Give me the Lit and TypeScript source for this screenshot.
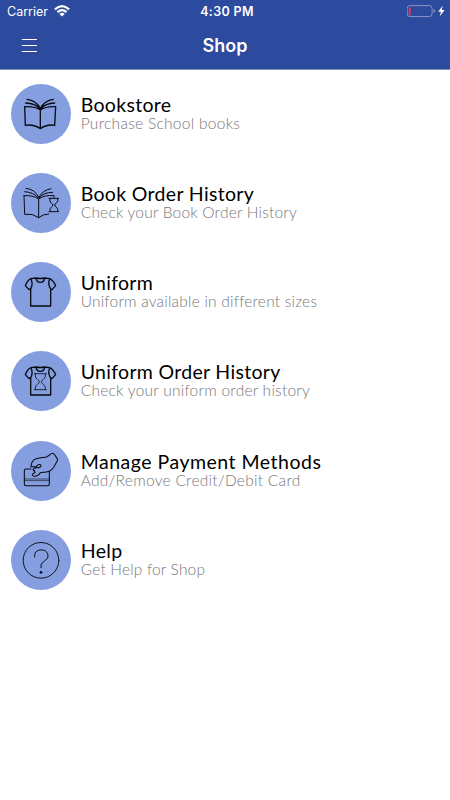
import { LitElement, html, css, svg } from "lit";
import { customElement, property } from "lit/decorators.js";
import { styleMap } from "lit/directives/style-map.js";

const tee = svg`<path stroke-width="4" d="M78 68 L93 66 Q106 69 119 66 L134 68 Q144 72 152 89 L141 101 L137 98 V150 H77 V98 L72 101 L61 89 Q68 72 78 68 Z M93 67 Q95 79 106 79 Q117 79 119 67 M78 69 Q85 83 77 99 M134 69 Q127 83 137 99"/>`;

const icons: Record<string, unknown> = {
  book: svg`<path stroke-width="4" d="M59 86 Q88 84 106 96 Q125 84 152 86 L149 142 Q126 138 106 152 Q86 138 61 142 Z M106 96 V152 M62 75 Q91 75 106 94 Q121 75 149 75 M66 64 Q94 67 106 92 Q118 67 145 64"/>`,
  bookHistory: svg`<path stroke-width="3" d="M57 86 Q83 84 101 96 Q119 83 147 86 V91 M57 86 L59 142 Q83 138 101 152 Q114 141 131 141 M101 96 V152 M59 74 Q87 76 101 94 Q117 75 143 76 M63 64 Q91 67 101 92 Q113 69 138 65 M132 94 H161 M132 134 H161 M135 95 V101 C135 109 144 109 144 114 C144 119 135 121 135 128 V133 M158 95 V101 C158 109 149 109 149 114 C149 119 158 121 158 128 V133"/>`,
  shirt: tee,
  shirtHistory: svg`${tee}<path stroke-width="2.4" d="M88 86 H124 M88 134 H124 M91 87 V93 C91 103 103 104 103 110 C103 117 91 119 91 127 V133 M121 87 V93 C121 103 109 104 109 110 C109 117 121 119 121 127 V133"/>`,
  payment: svg`<path stroke-width="3.2" d="M78 102 H63 Q58 102 58 107 V147 Q58 152 63 152 H128 Q133 152 133 147 V110 M78 95 C79 82 84 75 91 72 C103 68 118 67 125 66 L139 56 Q144 53 147 57 L157 71 Q159 75 156 79 L152 86 C146 101 137 110 124 111 C115 112 110 112 106 113 C101 121 94 125 85 123 C79 121 82 115 89 114 C91 109 88 106 84 104 M77 95 H94 C98 87 108 87 108 92 C108 97 101 98 94 98 Q86 98 84 104"/><path stroke-width="1.8" d="M59 132 H132 M59 137 H132"/>`,
  help: svg`<circle stroke-width="2.8" cx="108" cy="109" r="53.5"/><path stroke-width="3" d="M89 99 V94 C89 72 129 72 129 95 C129 111 108 111 108 126 V131"/><circle class="dot" cx="108" cy="145" r="4"/>`,
};

interface Entry {
  icon: string;
  title: string;
  detail: string;
  titleSpacing: number;
  detailSpacing: number;
}

const entries: Entry[] = [
  { icon: "book", title: "Bookstore", detail: "Purchase School books", titleSpacing: 0.32, detailSpacing: 0.29 },
  { icon: "bookHistory", title: "Book Order History", detail: "Check your Book Order History", titleSpacing: 0.33, detailSpacing: 0.21 },
  { icon: "shirt", title: "Uniform", detail: "Uniform available in different sizes", titleSpacing: 0.29, detailSpacing: 0.21 },
  { icon: "shirtHistory", title: "Uniform Order History", detail: "Check your uniform order history", titleSpacing: 0.31, detailSpacing: 0.25 },
  { icon: "payment", title: "Manage Payment Methods", detail: "Add/Remove Credit/Debit Card", titleSpacing: 0.5, detailSpacing: 0.28 },
  { icon: "help", title: "Help", detail: "Get Help for Shop", titleSpacing: 0.4, detailSpacing: 0.18 },
];

@customElement("shop-row")
class ShopRow extends LitElement {
  @property({ attribute: false }) entry!: Entry;

  static styles = css`
    :host { display: flex; height: 89.125px; padding-left: 11px; gap: 9.7px; box-sizing: border-box; }
    .badge { width: 60px; height: 60px; border-radius: 50%; background: #859ee0; flex: none; }
    .icon { display: block; width: 60px; height: 60px; fill: none; stroke: #080b12; stroke-linejoin: round; stroke-linecap: round; }
    .dot { fill: #080b12; stroke: none; }
    .copy { padding-top: 11px; white-space: nowrap; }
    .title { font-size: 19.5px; line-height: 20px; color: #000; }
    .detail { font-size: 15.5px; line-height: 17px; font-weight: 300; color: #77777b; }
  `;

  render() {
    const e = this.entry;
    return html`
      <div class="badge"><svg class="icon" viewBox="18 18 180 180">${icons[e.icon]}</svg></div>
      <div class="copy">
        <div class="title" style=${styleMap({ letterSpacing: `${e.titleSpacing}px` })}>${e.title}</div>
        <div class="detail" style=${styleMap({ letterSpacing: `${e.detailSpacing}px` })}>${e.detail}</div>
      </div>
    `;
  }
}

@customElement("app-root")
class AppRoot extends LitElement {
  static styles = css`
    :host { display: block; width: 450px; height: 800px; overflow: hidden; background: #fff; font-family: Lato, "Open Sans", sans-serif; }
    .header { height: 70px; box-sizing: border-box; background: #2c4a9e; border-bottom: 1px solid #7e8fc2; color: #fff; font-family: Inter, Roboto, sans-serif; }
    .status { height: 22px; display: grid; grid-template-columns: 1fr auto 1fr; align-items: center; padding: 0 5px 0 7px; font-size: 12.5px; }
    .carrier { display: flex; align-items: center; gap: 6px; letter-spacing: 0; }
    .wifi { width: 16px; height: 12px; }
    .clock { font-weight: 600; letter-spacing: 0.35px; margin-left: 2px; }
    .power { display: flex; justify-content: flex-end; align-items: center; }
    .battery { width: 38px; height: 14px; }
    .nav { height: 47px; display: grid; grid-template-columns: 1fr auto 1fr; align-items: center; }
    .menu { width: 16px; height: 16px; margin: -1px 0 0 21px; }
    .heading { font-size: 18px; font-weight: 600; letter-spacing: 0; }
    .list { padding-top: 14px; }
  `;

  render() {
    return html`
      <div class="header">
        <div class="status">
          <div class="carrier">
            <span>Carrier</span>
            <svg class="wifi" viewBox="0 0 16 12" fill="none" stroke="#fff" stroke-width="2.1">
              <path d="M0.9 4.4 Q8 -2 15.1 4.4 M3.4 7.1 Q8 3 12.6 7.1" />
              <path d="M5.3 8.9 Q8 6.6 10.7 8.9 L8 11.6 Z" fill="#fff" stroke="none" />
            </svg>
          </div>
          <div class="clock">4:30 PM</div>
          <div class="power">
            <svg class="battery" viewBox="0 0 38 14">
              <rect x="0.1" y="1.6" width="25" height="11" rx="2.8" fill="none" stroke="#8695c8" />
              <rect x="1.7" y="3.2" width="2" height="8" rx="0.8" fill="#f43148" />
              <path d="M26.6 5 Q28.3 5.5 28.3 7 Q28.3 8.6 26.6 9 Z" fill="#8695c8" />
              <path d="M35.8 1.5 L31.2 7.8 H34 L32.6 12.5 L37.6 6.1 H34.7 Z" fill="#fff" />
            </svg>
          </div>
        </div>
        <div class="nav">
          <svg class="menu" viewBox="0 0 16 16" stroke="#fff" stroke-width="1">
            <path d="M0.8 2.5 H16 M0.8 8.5 H16 M0.8 14.5 H16" />
          </svg>
          <div class="heading">Shop</div>
        </div>
      </div>
      <div class="list">${entries.map((e) => html`<shop-row .entry=${e}></shop-row>`)}</div>
    `;
  }
}
